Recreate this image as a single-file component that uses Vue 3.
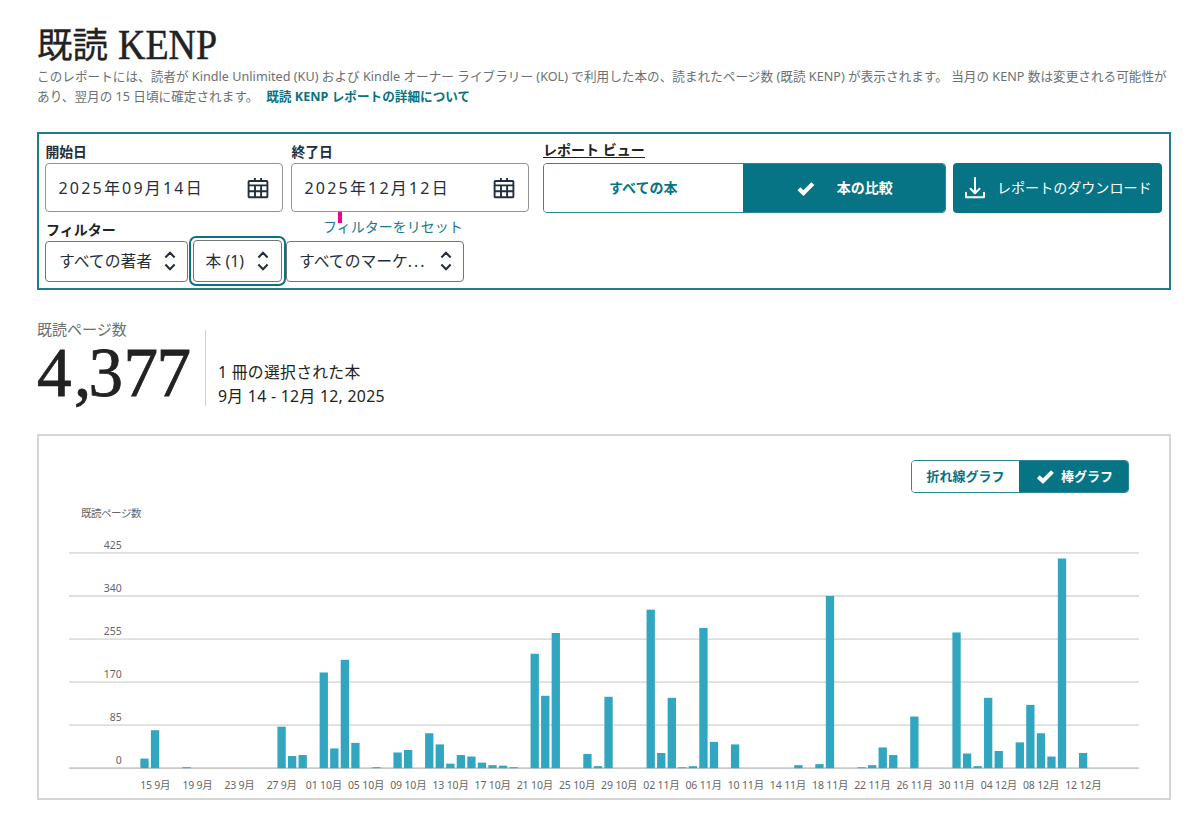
<script setup>
const days = 90
const pages = {
  0: 19, 1: 75, 4: 2, 13: 82, 14: 24, 15: 26, 17: 189, 18: 39, 19: 214, 20: 50,
  22: 2, 24: 31, 25: 36, 27: 69, 28: 47, 29: 9, 30: 26, 31: 23, 32: 11, 33: 6,
  34: 5, 35: 2, 37: 226, 38: 143, 39: 267, 42: 28, 43: 4, 44: 141, 48: 313,
  49: 30, 50: 139, 51: 1, 52: 4, 53: 277, 54: 52, 56: 47, 62: 6, 64: 8, 65: 340,
  68: 1, 69: 6, 70: 41, 71: 26, 73: 102, 77: 268, 78: 29, 79: 4, 80: 139,
  81: 34, 83: 51, 84: 125, 85: 69, 86: 23, 87: 414, 89: 30,
}
const pitch = 10.546
const first = 105.5
const base = 332.2
const scale = 43.05 / 85
const bars = Object.entries(pages).map(([day, value]) => ({
  x: first + day * pitch - 4.15,
  h: Math.max(value * scale, 0.9),
}))
const ticks = [425, 340, 255, 170, 85, 0].map((value) => ({ value, y: base - value * scale }))
const start = Date.UTC(2025, 8, 14)
const labels = []
for (let i = 1; i < days; i += 4) {
  const d = new Date(start + i * 86400000)
  const month = d.getUTCMonth() + 1
  labels.push({
    x: first + i * pitch + 0.3,
    text: `${String(d.getUTCDate()).padStart(2, '0')} ${month}月`,
    width: month > 9 ? 36.5 : 30.2,
  })
}
const dates = [
  { label: '開始日', value: '2025年09月14日' },
  { label: '終了日', value: '2025年12月12日' },
]
</script>

<template>
  <main class="page">
    <h1><span class="cjk">既読</span><svg class="kenp" width="101" height="54"><text x="0" y="40.5" textLength="99" lengthAdjust="spacingAndGlyphs">KENP</text></svg></h1>
    <p class="intro">
      <span class="line l1">このレポートには、読者が Kindle Unlimited (KU) および Kindle オーナー ライブラリー (KOL) で利用した本の、読まれたページ数 (既読 KENP) が表示されます。 当月の KENP 数は変更される可能性が</span>
      <span class="line l2">あり、翌月の 15 日頃に確定されます。 <a>既読 KENP レポートの詳細について</a></span>
    </p>

    <section class="panel">
      <div class="row">
        <div v-for="d in dates" :key="d.label" class="field">
          <label>{{ d.label }}</label>
          <div class="date">
            <span>{{ d.value }}</span>
            <svg width="22" height="22" viewBox="0 0 22 22" fill="none" stroke="#232f3e" stroke-width="1.9">
              <rect x="1.6" y="4" width="18.8" height="16.2" rx="0.8" />
              <path d="M1.6 8.4H20.4M1.6 14.2H20.4M8 8.4V20M14.1 8.4V20M7.9 1V5M14.1 1V5" />
            </svg>
          </div>
        </div>
        <div class="view">
          <label>レポート ビュー</label>
          <div class="toggle">
            <button><span>すべての本</span></button>
            <button class="on">
              <svg width="18" height="15" viewBox="0 0 17 14"><path d="M1.8 7.2L6.1 11.3L15 2.4" fill="none" stroke="#fff" stroke-width="3.9" /></svg>
              <span>本の比較</span>
            </button>
          </div>
        </div>
        <button class="download">
          <svg width="22" height="22" viewBox="0 0 22 22" fill="none" stroke="#fff" stroke-width="2"><path d="M11 1V16M6.5 11.7L11 16.2L15.5 11.7M2 15.8V20.2H20V15.8" stroke-linejoin="round" stroke-linecap="round" /></svg>
          <span>レポートのダウンロード</span>
        </button>
      </div>
      <div class="caption">
        <label>フィルター</label>
        <a>フィルターをリセット</a>
        <i class="mark"></i>
      </div>
      <div class="filters">
        <div class="select author"><span>すべての著者</span><svg width="12" height="20" viewBox="0 0 12 20"><path d="M1.4 6.4L6 1.8L10.6 6.4M1.4 13.6L6 18.2L10.6 13.6" /></svg></div>
        <div class="ring"><div class="select book"><span>本 (1)</span><svg width="12" height="20" viewBox="0 0 12 20"><path d="M1.4 6.4L6 1.8L10.6 6.4M1.4 13.6L6 18.2L10.6 13.6" /></svg></div></div>
        <div class="select market"><span>すべてのマーケ<span class="dots">...</span></span><svg width="12" height="20" viewBox="0 0 12 20"><path d="M1.4 6.4L6 1.8L10.6 6.4M1.4 13.6L6 18.2L10.6 13.6" /></svg></div>
      </div>
    </section>

    <section class="summary">
      <div class="total">
        <div class="total-label">既読ページ数</div>
        <svg width="160" height="76"><text x="0 37 51.5 86.5 119.5" y="61">4,377</text></svg>
      </div>
      <div class="detail">
        <div class="d1">1 冊の選択された本</div>
        <div class="d2">9月 14 - 12月 12, 2025</div>
      </div>
    </section>

    <section class="card">
      <div class="toggle small">
        <button><span>折れ線グラフ</span></button>
        <button class="on">
          <svg width="19" height="15" viewBox="0 0 17 14"><path d="M1.8 7.2L6.1 11.3L15 2.4" fill="none" stroke="#fff" stroke-width="3.7" /></svg>
          <span>棒グラフ</span>
        </button>
      </div>
      <svg class="chart" width="1130" height="361">
        <text x="42" y="81.2" textLength="60.5">既読ページ数</text>
        <g v-for="t in ticks" :key="t.value">
          <line x1="30" x2="1100" :y1="t.y" :y2="t.y" :class="{ zero: t.value === 0 }" />
          <text x="82.8" :y="t.y - 4" text-anchor="end">{{ t.value }}</text>
        </g>
        <rect v-for="b in bars" :key="b.x" :x="b.x" :y="base - b.h" width="8.3" :height="b.h" fill="#31a6c0" />
        <text v-for="l in labels" :key="l.x" :x="l.x" y="353.2" text-anchor="middle" :textLength="l.width">{{ l.text }}</text>
      </svg>
    </section>
  </main>
</template>

<style>
body { margin: 0; background: #fff; }
</style>

<style scoped>
.page {
  box-sizing: border-box;
  width: 1200px;
  height: 814px;
  padding: 24px 29px 0 37px;
  overflow: hidden;
  font-family: "Noto Sans", "Noto Sans CJK JP", sans-serif;
  color: #232f3e;
  white-space: nowrap;
}
h1 { display: flex; align-items: center; height: 42px; margin: 0; font-weight: 400; color: #222; }
.cjk { width: 81px; padding-bottom: 5px; font-size: 35.5px; line-height: 42px; font-family: "Noto Sans CJK JP", sans-serif; -webkit-text-stroke: 0.3px #222; }
.kenp { overflow: visible; }
.kenp text { font: 42px "Liberation Serif", serif; fill: #222; stroke: #222; stroke-width: 0.5; }
.intro { margin: 1px 0 0; font-size: 12.6px; line-height: 20px; letter-spacing: 0.034px; color: #6b7073; }
.line { display: block; }
.intro a { margin-left: 4.5px; font-weight: 700; color: #0a7280; }
button { padding: 0; border: 0; font-family: inherit; background: #fff; color: #067485; white-space: nowrap; }
label { display: block; font-size: 14px; font-weight: 700; line-height: 20px; }
.panel {
  box-sizing: border-box;
  width: 1134px;
  height: 158px;
  margin-top: 25px;
  border: 2px solid #1f7c89;
  padding: 8px 6px 0;
}
.row { display: flex; align-items: flex-end; height: 71px; }
.field { margin-right: 8px; }
.field label { font-size: 13.8px; padding-left: 0.5px; }
.date {
  box-sizing: border-box;
  display: flex;
  align-items: center;
  justify-content: space-between;
  width: 238px;
  height: 49px;
  margin: 1px 0;
  padding: 0 13px 0 12.5px;
  border: 1px solid #8f9496;
  border-radius: 4px;
  font-size: 16px;
  letter-spacing: 2.2px;
}
.date span, .toggle span, .download span { position: relative; top: -1px; }
.view { width: 403px; margin-left: 5.5px; }
.view label { width: 102px; height: 15px; margin: 0 0 5px 0.5px; line-height: 15px; border-bottom: 1.5px solid #222; color: #222; }
.toggle {
  box-sizing: border-box;
  display: flex;
  height: 50px;
  border: 1px solid #2b8795;
  border-radius: 4px;
  overflow: hidden;
}
.toggle button { flex: 1 1 0; box-sizing: border-box; display: flex; align-items: center; justify-content: center; font-size: 14px; font-weight: 700; }
.view .toggle span { top: -1.5px; }
.toggle .on { gap: 22px; padding-left: 2px; background: #067485; color: #fff; }
.download {
  display: flex;
  align-items: center;
  width: 209px;
  height: 50px;
  margin-left: 7px;
  padding-left: 11px;
  gap: 11.5px;
  border-radius: 4px;
  background: #067485;
  color: #fff;
  font-size: 14.05px;
}
.caption { position: relative; display: flex; align-items: center; height: 28px; padding-left: 1px; }
.caption label { width: 277px; padding-top: 5px; color: #222; }
.caption a { font-size: 14px; line-height: 20px; color: #1b7a87; }
.mark { position: absolute; left: 293px; top: -1px; width: 4px; height: 11px; background: #ec008c; }
.filters { display: flex; align-items: center; height: 40px; }
.select {
  box-sizing: border-box;
  display: flex;
  align-items: center;
  justify-content: space-between;
  height: 41px;
  padding: 0 11px 1px 13px;
  border: 1px solid #6f7779;
  border-radius: 4px;
  font-size: 15.8px;
}
.select svg { fill: none; stroke: #232f3e; stroke-width: 2.1; }
.author { width: 143px; }
.dots { letter-spacing: 2px; }
.ring { padding: 2px; border: 2px solid #0a7280; border-radius: 7px; margin-left: 0.5px; }
.ring .select { width: 89px; height: 42px; padding-left: 12px; padding-right: 12px; }
.market { width: 178px; padding-left: 12.5px; }
.summary { display: flex; height: 84px; margin-top: 31.5px; color: #222; }
.total { box-sizing: border-box; width: 168px; }
.total-label { font-size: 15px; line-height: 15px; color: #6b7073; }
.total svg { display: block; margin-top: -2px; }
.total text { font: 69px "Liberation Serif", serif; fill: #222; stroke: #222; stroke-width: 0.8; }
.detail { height: 46px; margin-top: 8px; padding: 30px 0 0 12px; border-left: 1px solid #d2d2d2; }
.detail div { font-size: 15.8px; line-height: 24px; letter-spacing: 0.3px; }
.card { box-sizing: border-box; display: grid; width: 1134px; height: 366px; margin-top: 28.5px; border: 2px solid #d4d4d4; }
.small, .chart { grid-area: 1 / 1; }
.small { justify-self: end; width: 218px; height: 33px; margin: 24px 40px 0 0; z-index: 1; }
.toggle.small button { font-size: 13px; }
.toggle.small .on { gap: 6px; padding-left: 2px; }
.chart text { font-size: 10.5px; fill: #666; }
.chart line { stroke: #dedede; stroke-width: 1.8; }
.chart .zero { stroke: #cacaca; }
</style>
